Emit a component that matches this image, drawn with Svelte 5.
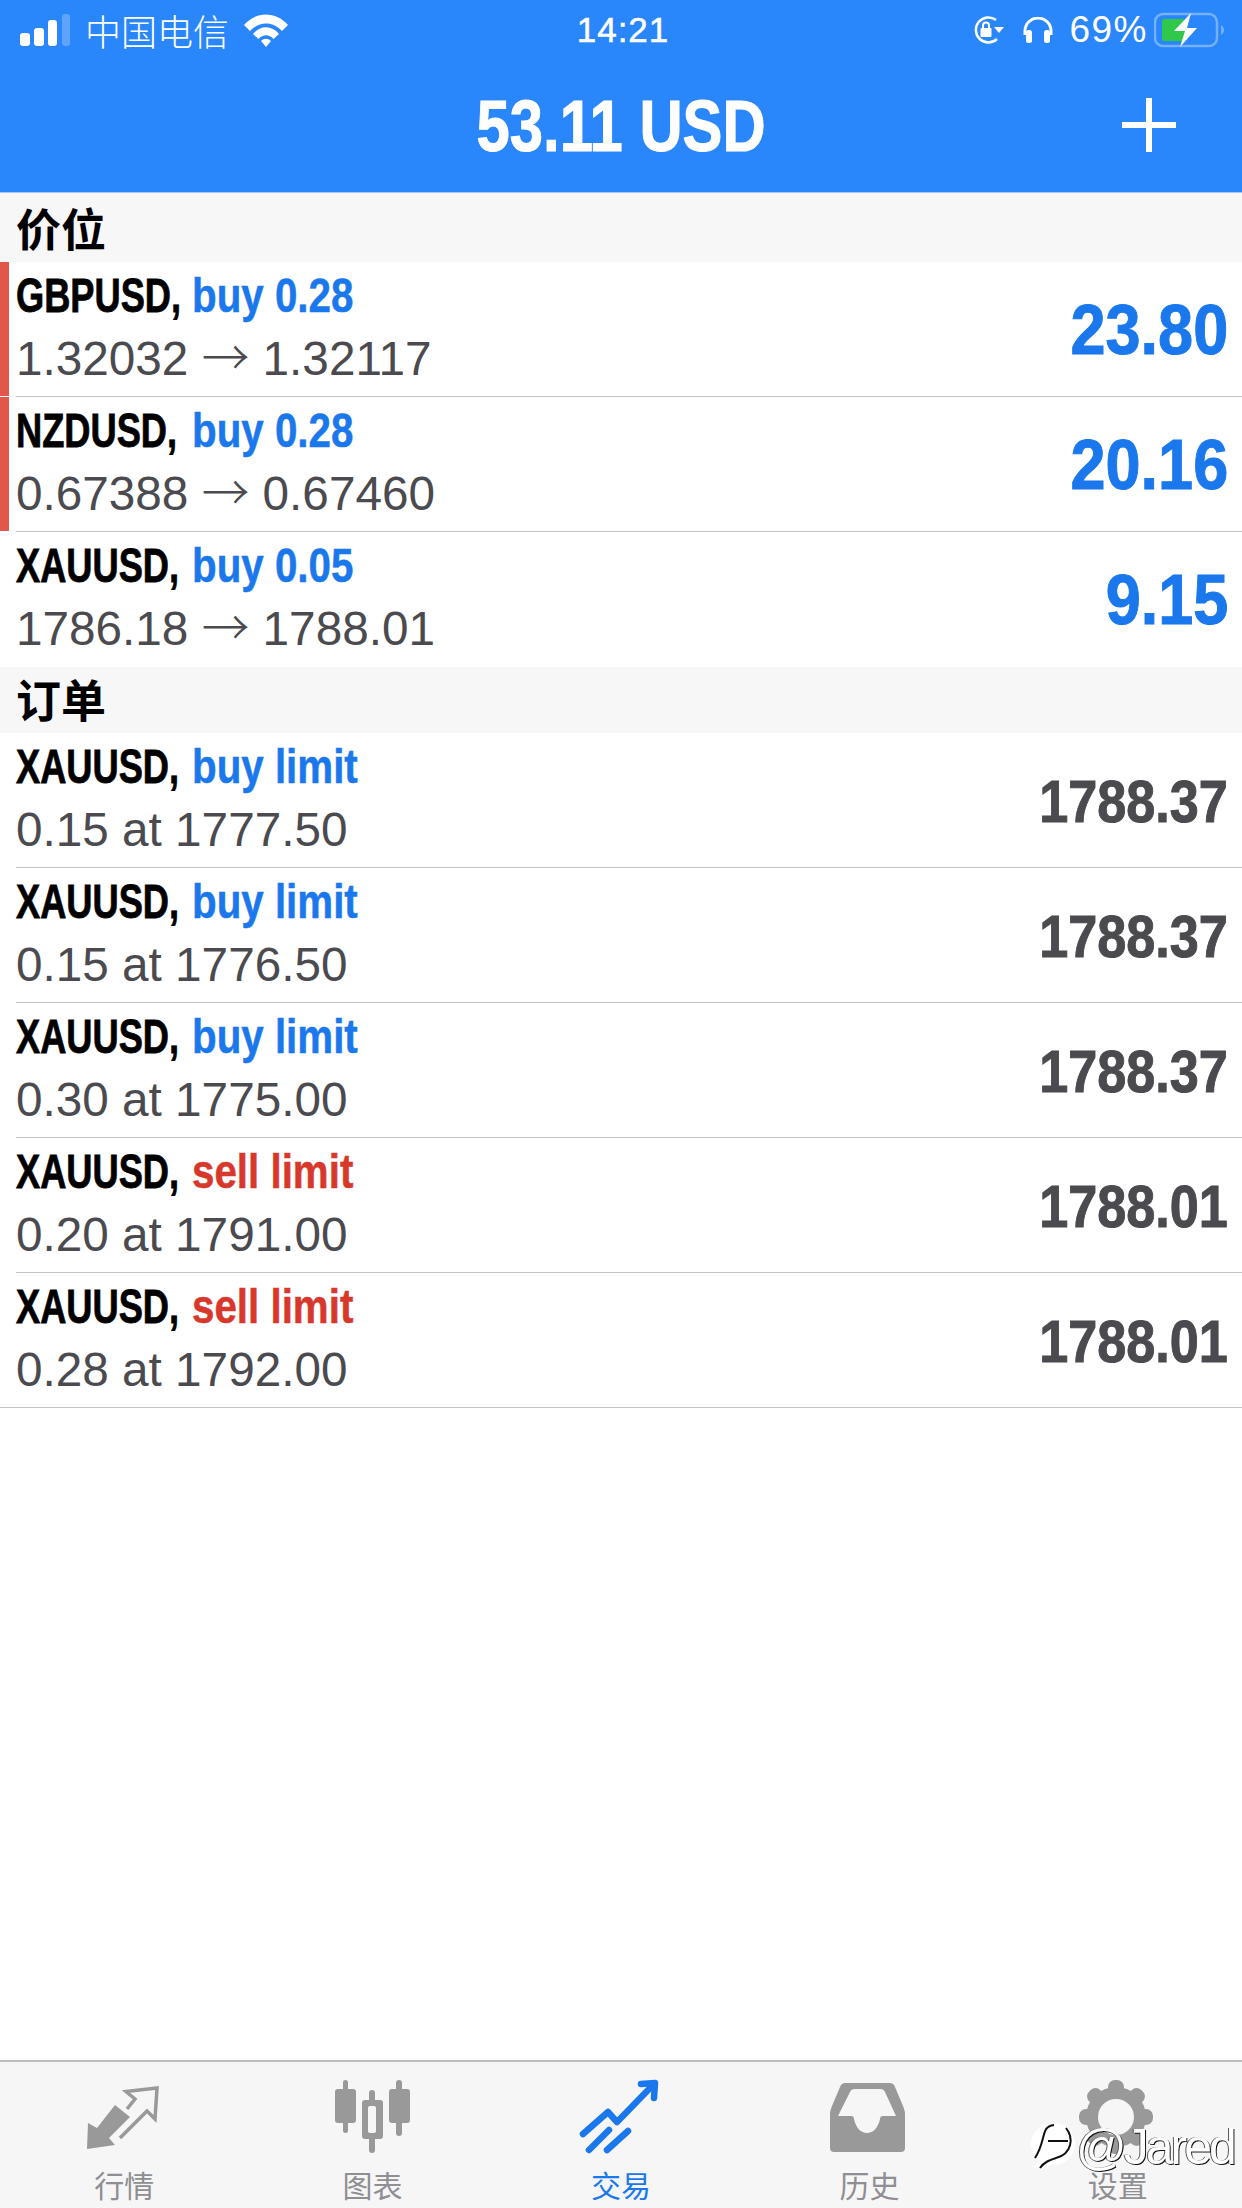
<script lang="ts">
	// Data
	const positions = [
		{ symbol: 'GBPUSD', side: 'buy 0.28', open: '1.32032', close: '1.32117', value: '23.80', marked: true },
		{ symbol: 'NZDUSD', side: 'buy 0.28', open: '0.67388', close: '0.67460', value: '20.16', marked: true },
		{ symbol: 'XAUUSD', side: 'buy 0.05', open: '1786.18', close: '1788.01', value: '9.15', marked: false, noLine: true }
	]

	const orders = [
		{ symbol: 'XAUUSD', side: 'buy limit', detail: '0.15 at 1777.50', value: '1788.37' },
		{ symbol: 'XAUUSD', side: 'buy limit', detail: '0.15 at 1776.50', value: '1788.37' },
		{ symbol: 'XAUUSD', side: 'buy limit', detail: '0.30 at 1775.00', value: '1788.37' },
		{ symbol: 'XAUUSD', side: 'sell limit', detail: '0.20 at 1791.00', value: '1788.01' },
		{ symbol: 'XAUUSD', side: 'sell limit', detail: '0.28 at 1792.00', value: '1788.01', fullLine: true }
	]

	const tabs = ['行情', '图表', '交易', '历史', '设置']
	const gearAngles = [0, 45, 90, 135]
</script>


{#snippet row(item, profit)}
	<div class="row" class:marked={item.marked} class:full-line={item.fullLine}>
		<div class="row-inner" class:no-line={item.noLine}>
			<div class="info">
				<div class="title">
					<span class="symbol">{item.symbol},</span>
					<span class="side" class:sell={item.side.startsWith('sell')}>{item.side}</span>
				</div>
				<div class="detail">
					{#if item.open}
						{item.open} <span class="arrow">→</span> {item.close}
					{:else}
						{item.detail}
					{/if}
				</div>
			</div>
			<div class="value" class:profit>{item.value}</div>
		</div>
	</div>
{/snippet}


<div class="phone">
	<header>
		<div class="status">
			<div class="status-side">
				<svg width="50" height="32" viewBox="0 0 50 32">
					<rect x="0" y="19" width="10" height="13" rx="3" fill="#fff" />
					<rect x="14" y="14" width="10" height="18" rx="3" fill="#fff" />
					<rect x="28" y="6" width="9" height="26" rx="3" fill="#fff" />
					<rect x="42" y="0" width="8" height="32" rx="3" fill="#fff" opacity="0.25" />
				</svg>
				<span class="carrier">中国电信</span>
				<svg width="44" height="33" viewBox="0 0 44 33">
					<path d="M0 11 C12 -3 32 -3 44 11 L38 17 C29 7 15 7 6 17 Z" fill="#fff" />
					<path d="M9 20 C16 11 28 11 35 20 L29.500 25 C25 20 19 20 14.500 25 Z" fill="#fff" />
					<path d="M17 27 C20 24 24 24 27 27 L22 33 Z" fill="#fff" />
				</svg>
			</div>
			<span class="time">14:21</span>
			<div class="status-side right">
				<svg class="lock" width="32" height="28" viewBox="0 0 32 28" fill="none">
					<path d="M24 4 A12.500 12.500 0 1 0 25 23" stroke="#fff" stroke-width="2.500" />
					<path d="M22 11 L32 11 L27 17 Z" fill="#fff" />
					<rect x="8.500" y="12" width="11" height="9" rx="1" fill="#fff" />
					<path d="M11 12 V9.500 A3 3 0 0 1 17 9.500 V12" stroke="#fff" stroke-width="2" />
				</svg>
				<svg class="phones" width="30" height="26" viewBox="0 0 30 26" fill="none">
					<path d="M2 18 V14 A13 13 0 0 1 28 14 V18" stroke="#fff" stroke-width="3" />
					<rect x="3" y="13" width="6" height="13" rx="2.500" fill="#fff" />
					<rect x="21" y="13" width="6" height="13" rx="2.500" fill="#fff" />
				</svg>
				<span class="percent">69%</span>
				<svg class="battery" width="72" height="36" viewBox="0 0 72 36" fill="none">
					<rect x="1" y="2" width="62" height="32" rx="8" stroke="#fff" stroke-opacity="0.35" stroke-width="2.500" />
					<rect x="8" y="7" width="23" height="22" rx="2" fill="#2fc84a" />
					<path d="M67 13 C71 15 71 21 67 23 Z" fill="#fff" opacity="0.35" />
					<path d="M37 1 L20 19 L31 19 L26 35 L43 16 L33 16 Z" fill="#fff" />
				</svg>
			</div>
		</div>
		<div class="navbar">
			<h1>53.11 USD</h1>
			<svg class="plus" width="54" height="54" viewBox="0 0 54 54">
				<rect x="0" y="24" width="54" height="6" fill="#fff" />
				<rect x="24" y="0" width="6" height="54" fill="#fff" />
			</svg>
		</div>
	</header>

	<main>
		<div class="section first">价位</div>
		{#each positions as item}
			{@render row(item, true)}
		{/each}
		<div class="section second">订单</div>
		{#each orders as item}
			{@render row(item, false)}
		{/each}
	</main>

	<nav>
		{#each tabs as label, i}
			<div class="tab" class:active={i === 2}>
				<svg width="90" height="80" viewBox="0 0 90 80">
					{#if i === 0}
						<path d="M8 71 L9 45 L18 50 L36 27 L51 39 L30 60 L36 67 Z" fill="#999" />
						<path d="M48 31 L56 21 L47 13.500 L78 10 L76 41 L68 33 L41 60" fill="none" stroke="#999" stroke-width="3.500" />
					{:else if i === 1}
						<g fill="#999">
							<rect x="7" y="11" width="21" height="34" rx="3" />
							<rect x="15" y="2" width="5" height="53" rx="2.500" />
							<rect x="61" y="11" width="21" height="34" rx="3" />
							<rect x="68" y="2" width="6" height="56" rx="3" />
							<rect x="41" y="12" width="6" height="63" rx="3" />
							<rect x="34" y="22" width="21" height="39" rx="3" />
						</g>
						<rect x="40" y="28" width="8" height="27" rx="2" fill="#f6f6f6" />
					{:else if i === 2}
						<g fill="none" stroke="#1a78ec" stroke-width="6.500" stroke-linecap="round" stroke-linejoin="round">
							<path d="M7 56 L32 34 L41 44 L76 8" />
							<path d="M65 6 L79 5 L78 20" />
							<path d="M13 72 L33 52" />
							<path d="M31 72 L52 53" />
						</g>
					{:else if i === 3}
						<path d="M21 5 H66 C68 5 70 6 71 9 L79 28 C80 31 81 33 81 36 V70 C81 73 79 74 77 74 H10 C8 74 6 73 6 70 V36 C6 33 7 31 8 28 L16 9 C17 6 19 5 21 5 Z" fill="#999" />
						<path d="M31 11 H56 C59 11 60 12 61 14 L72 38 L59 38 C57 38 56 39 56 41 C54 50 49 55 43 55 C37 55 32 50 30 41 C30 39 29 38 27 38 L14 38 L26 14 C27 12 28 11 31 11 Z" fill="#f6f6f6" />
					{:else}
						<circle cx="43" cy="39" r="30" fill="#999" />
						{#each gearAngles as angle}
							<rect x="35" y="2" width="16" height="74" rx="7" fill="#999" transform="rotate({angle} 43 39)" />
						{/each}
						<circle cx="43" cy="39" r="18" fill="#f6f6f6" />
					{/if}
				</svg>
				<span>{label}</span>
			</div>
		{/each}
		<div class="watermark">
			<svg width="46" height="50" viewBox="0 0 46 50" fill="none">
				<ellipse cx="23" cy="22" rx="22" ry="21" fill="#fff" />
				<path d="M3 44 C8 42 12 40 14 36 L26 40 C14 48 8 48 3 44 Z" fill="#fff" />
				<path d="M24 3 C16 4 15 8 13 16 C11 24 9 30 5 36" stroke="#111" stroke-width="2" />
				<path d="M18 19 H38" stroke="#111" stroke-width="2" />
				<path d="M36 6 C44 16 42 32 26 36 C20 38 14 40 10 46" stroke="#111" stroke-width="2" />
			</svg>
			<span>@Jared</span>
		</div>
	</nav>
</div>


<style>
	:global(body) {
		margin: 0;
		background: #fff;
	}

	.phone {
		width: 1242px;
		height: 2208px;
		display: flex;
		flex-direction: column;
		font-family: 'Liberation Sans', 'Noto Sans CJK SC', sans-serif;
		overflow: hidden;
	}

	header {
		height: 192px;
		background: #2a86fb;
		color: #fff;
		border-bottom: 1px solid #a9c9f0;
	}

	.status {
		height: 60px;
		display: grid;
		grid-template-columns: 1fr auto 1fr;
		align-items: center;
		padding: 0 16px 0 20px;
	}

	.status-side {
		display: flex;
		align-items: center;
		gap: 15px;
	}

	.status-side.right {
		justify-content: flex-end;
		gap: 0;
	}

	.carrier {
		font-size: 36px;
		font-family: 'Noto Sans CJK SC', sans-serif;
		font-weight: 300;
		line-height: 1;
	}

	.time {
		font-size: 35px;
		letter-spacing: 1px;
		-webkit-text-stroke: 0.5px;
	}

	.phones {
		margin-left: 19px;
	}

	.percent {
		font-size: 37px;
		letter-spacing: 1.500px;
		margin-left: 16px;
		margin-right: 6px;
	}

	.navbar {
		position: relative;
		height: 132px;
		display: flex;
		align-items: center;
		justify-content: center;
	}

	h1 {
		margin: 0;
		font-size: 72px;
		font-weight: 700;
		transform: scaleX(0.83);
		white-space: nowrap;
		-webkit-text-stroke: 1px;
	}

	.plus {
		position: absolute;
		right: 66px;
		top: 38px;
	}

	.section {
		background: #f7f7f7;
		color: #000;
		font-family: 'Noto Sans CJK SC', sans-serif;
		font-weight: 700;
		font-size: 45px;
		line-height: 1;
		padding-left: 16px;
		display: flex;
		align-items: center;
	}

	.section.first {
		height: 69px;
	}

	.section.second {
		height: 66px;
		box-sizing: border-box;
		padding-bottom: 4px;
	}

	.row {
		height: 135px;
		box-sizing: border-box;
		padding-left: 16px;
		position: relative;
	}

	.row.full-line {
		padding-left: 0;
	}

	.row.full-line .info {
		padding-left: 16px;
	}

	.row.marked::before {
		content: '';
		position: absolute;
		left: 0;
		top: 0;
		bottom: 1px;
		width: 9px;
		background: #e2574c;
	}

	.row-inner {
		height: 100%;
		box-sizing: border-box;
		border-bottom: 1px solid #c4c4c6;
		padding-right: 14px;
		display: flex;
		justify-content: space-between;
		align-items: center;
	}

	.row-inner.no-line {
		border-bottom-color: transparent;
	}

	.info {
		display: flex;
		flex-direction: column;
		gap: 11px;
		padding-bottom: 2px;
	}

	.title {
		height: 52px;
		display: flex;
		align-items: center;
		font-size: 48px;
		font-weight: 700;
		line-height: 1;
		white-space: nowrap;
		margin-top: -1px;
	}

	.symbol {
		color: #000;
		display: inline-block;
		width: 165px;
		transform: scaleX(0.755);
		transform-origin: left center;
		-webkit-text-stroke: 0.8px;
	}

	.side {
		color: #1a78ec;
		display: inline-block;
		transform: scaleX(0.84);
		transform-origin: left center;
		margin-left: 11px;
		-webkit-text-stroke: 0.5px;
	}

	.side.sell {
		color: #d8382c;
	}

	.detail {
		height: 52px;
		line-height: 52px;
		color: #4a4a4f;
		font-size: 47.700px;
		white-space: nowrap;
	}

	.arrow {
		font-family: 'Noto Sans CJK SC', sans-serif;
		font-weight: 300;
		line-height: 0;
	}

	.value {
		color: #4a4a4f;
		font-size: 60px;
		font-weight: 700;
		transform: scaleX(0.87);
		transform-origin: right center;
		padding-top: 2px;
		-webkit-text-stroke: 1px;
	}

	.value.profit {
		color: #1a78ec;
		font-size: 70px;
		transform: scaleX(0.9);
	}

	main {
		flex: 1;
	}

	nav {
		position: relative;
		height: 146px;
		background: #f6f6f6;
		border-top: 2px solid #bdbdbd;
		display: grid;
		grid-template-columns: repeat(5, 1fr);
	}

	.tab {
		display: flex;
		flex-direction: column;
		align-items: center;
		color: #8e8e93;
		padding-top: 16px;
	}

	.tab span {
		font-family: 'Noto Sans CJK SC', sans-serif;
		font-size: 30px;
		line-height: 30px;
		margin-top: 11px;
	}

	.tab.active {
		color: #1a78ec;
	}

	.watermark {
		position: absolute;
		left: 1030px;
		top: 60px;
		display: flex;
		align-items: center;
		color: #fff;
		font-size: 50px;
		line-height: 50px;
		letter-spacing: -3px;
		text-shadow: 1px 1px 0 #111, -1px 0 0 #555;
	}
</style>
